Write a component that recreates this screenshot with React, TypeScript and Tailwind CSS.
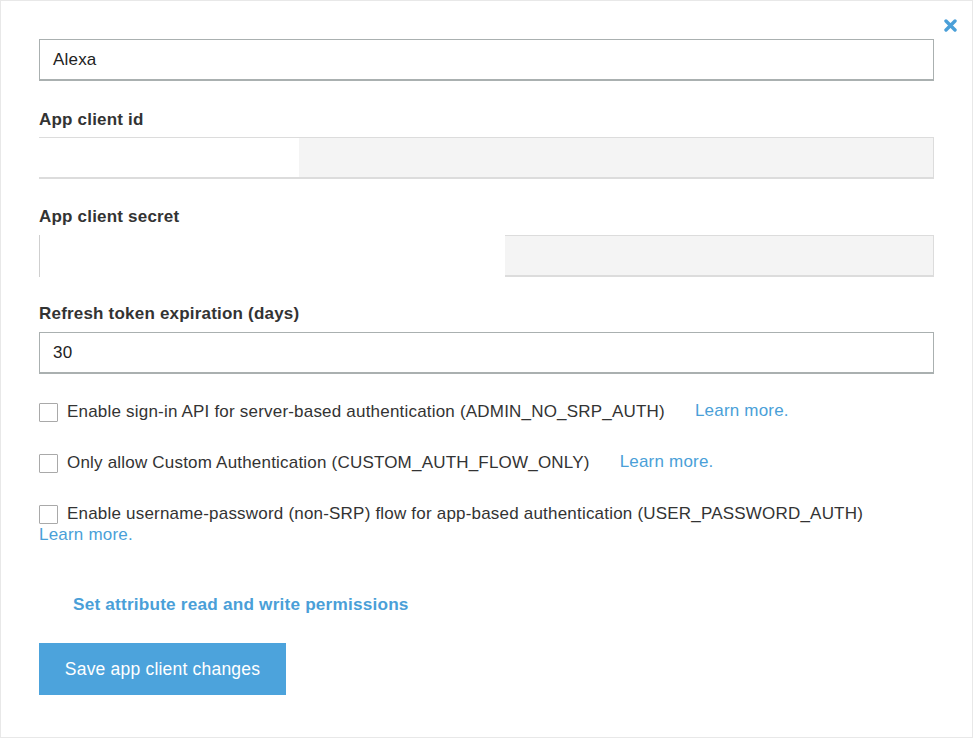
import React from 'react';

const font = { fontFamily: '"Liberation Sans", Arial, sans-serif' };

interface FlowOption {
  label: string;
  inlineLink: boolean;
}

const options: FlowOption[] = [
  { label: 'Enable sign-in API for server-based authentication (ADMIN_NO_SRP_AUTH)', inlineLink: true },
  { label: 'Only allow Custom Authentication (CUSTOM_AUTH_FLOW_ONLY)', inlineLink: true },
  { label: 'Enable username-password (non-SRP) flow for app-based authentication (USER_PASSWORD_AUTH)', inlineLink: false },
];

const Checkbox: React.FC = () => (
  <span className="inline-block w-[19px] h-[19px] shrink-0 border border-[#a9a9a9] bg-white rounded-[1px]" />
);

const App: React.FC = () => {
  return (
    <div className="w-[974px] h-[739px] bg-white" style={font}>
      <div className="relative w-[973px] h-[738px] border border-[#e8e8e8] pl-[38px] pr-[38px] pt-[38px] text-[#333] tracking-[0.2px]">
        {/* close */}
        <button className="absolute right-[15px] top-[18px] w-[13px] h-[13px]" aria-label="Close">
          <svg viewBox="0 0 13 13" width="13" height="13">
            <path d="M2 2 L11 11 M11 2 L2 11" stroke="#4a9fd8" strokeWidth="3.4" strokeLinecap="round" />
          </svg>
        </button>

        <div className="h-[42px] border border-[#aab0b0] border-b-2 flex items-center px-[13px] text-[17px] text-[#222]">
          Alexa
        </div>

        <div className="mt-[29px] text-[17px] font-bold leading-[20px]">App client id</div>
        <div className="relative mt-[7px] h-[42px] border border-[#dcdcdc] border-b-2 bg-[#f4f4f4]">
          <div className="absolute left-[-1px] top-0 bottom-0 w-[260px] bg-white" />
        </div>

        <div className="mt-[28px] text-[17px] font-bold leading-[20px]">App client secret</div>
        <div className="relative mt-[8px] h-[42px] border border-[#dcdcdc] border-b-2 bg-[#f4f4f4]">
          <div className="absolute left-[-1px] top-[-1px] bottom-[-2px] w-[466px] bg-white border-l border-[#cfcfcf]" />
        </div>

        <div className="mt-[27px] text-[17px] font-bold leading-[20px]">Refresh token expiration (days)</div>
        <div className="mt-[8px] h-[42px] border border-[#aab0b0] border-b-2 flex items-center px-[13px] text-[17px] text-[#222]">
          30
        </div>

        <div className="mt-[28px] flex flex-col gap-[31px]">
          {options.map((o) => (
            <div key={o.label}>
              <div className="flex items-center text-[17px] leading-[20px]">
                <Checkbox />
                <span className="ml-[9px] text-[#333]">{o.label}</span>
                {o.inlineLink && (
                  <a className="ml-[30px] -mt-[3px] text-[#4a9fd8] text-[17px]">Learn more.</a>
                )}
              </div>
              {!o.inlineLink && (
                <a className="block text-[#4a9fd8] text-[17px] leading-[20px] mt-[1px]">Learn more.</a>
              )}
            </div>
          ))}
        </div>

        <div className="mt-[49px] ml-[34px] text-[#4a9fd8] font-bold text-[17.2px] leading-[20px]">
          Set attribute read and write permissions
        </div>

        <button className="mt-[29px] w-[247px] h-[52px] bg-[#4ca3dc] text-white text-[17.5px] flex items-center justify-center">
          Save app client changes
        </button>
      </div>
    </div>
  );
};

export default App;
